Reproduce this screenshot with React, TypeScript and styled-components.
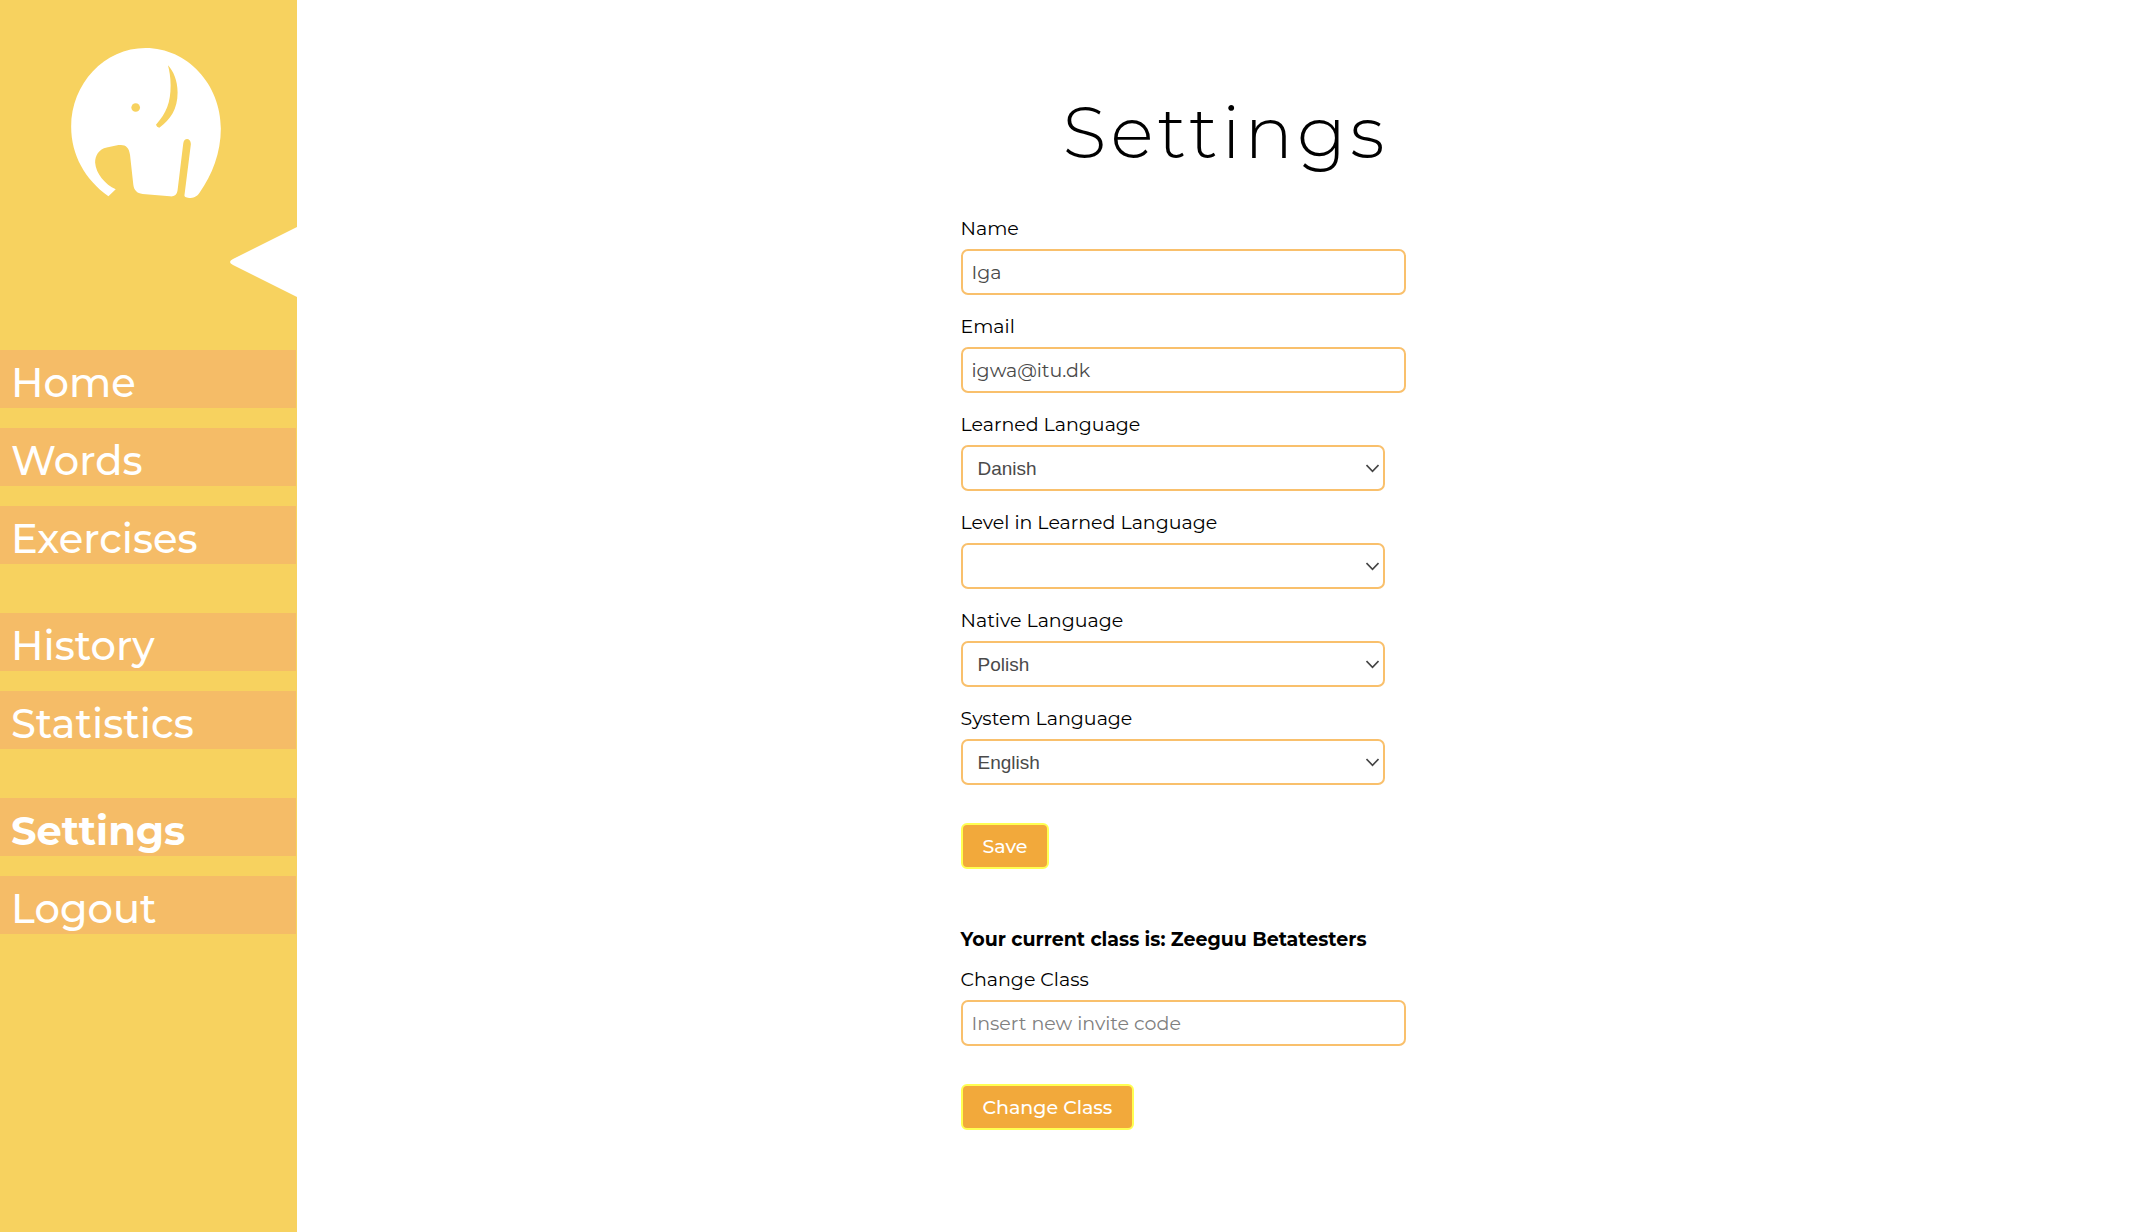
import React from "react";
import styled, { createGlobalStyle } from "styled-components";

const GlobalStyle = createGlobalStyle`
  * { box-sizing: border-box; }
  body {
    margin: 0;
    background: #fff;
    color: #000;
    font-family: Montserrat, Inter, "Open Sans", sans-serif;
    font-size: 19px;
    line-height: 24px;
  }
`;

const Page = styled.div`
  display: flex;
  min-height: 100vh;
`;

const Sidebar = styled.aside`
  display: flex;
  flex-direction: column;
  flex: 0 0 297px;
  background: #f7d25f;
`;

const LogoLink = styled.a`
  display: block;
  width: 150px;
  height: 150px;
  margin: 48px 0 0 71px;
`;

const LogoSvg = styled.svg`
  display: block;
  width: 100%;
  height: 100%;
`;

const CollapseButton = styled.button`
  align-self: flex-end;
  margin: 29px 0 53px;
  padding: 0;
  border: 0;
  background: none;
  cursor: pointer;

  svg { display: block; }
`;

const Nav = styled.nav`
  display: flex;
  flex-direction: column;
  gap: 49px;
  padding-right: 1px;
`;

const NavGroup = styled.div`
  display: flex;
  flex-direction: column;
  gap: 20px;
`;

const NavLink = styled.a<{ $active?: boolean }>`
  padding: 9px 11px 1px;
  background: #f5bc67;
  color: #fff;
  font-size: 40px;
  font-weight: ${(p) => (p.$active ? 700 : 500)};
  line-height: 48px;
  text-decoration: none;
`;

const Main = styled.main`
  flex: 1;
  display: flex;
  justify-content: center;
`;

const Column = styled.div`
  width: 530px;
  padding-top: 86px;
`;

const Title = styled.h1`
  margin: 0 0 39px;
  font-size: 72px;
  font-weight: 300;
  letter-spacing: 4px;
  line-height: 92px;
  text-align: center;
`;

const Form = styled.form`
  display: flex;
  flex-direction: column;
  align-items: flex-start;
`;

const Field = styled.div`
  display: flex;
  flex-direction: column;
  gap: 8px;
  width: 100%;
  margin-bottom: 20px;
`;

const Label = styled.label`
  font-size: 19px;
  line-height: 24px;
`;

const TextInput = styled.input`
  width: 84%;
  height: 46px;
  padding: 0 9px;
  border: 2px solid #f9c06c;
  border-radius: 7px;
  background: #fff;
  color: #4a4a4a;
  font: inherit;
  outline: none;

  &::placeholder { color: #808080; opacity: 1; }
`;

const SelectBox = styled.div`
  position: relative;
  width: 80%;

  svg {
    position: absolute;
    right: 6px;
    top: 19px;
    pointer-events: none;
  }
`;

const Select = styled.select`
  display: block;
  width: 100%;
  height: 46px;
  padding: 0 15px;
  appearance: none;
  border: 2px solid #f9c06c;
  border-radius: 7px;
  background: #fff;
  color: #4a4a4a;
  font-family: "Liberation Sans", Arial, sans-serif;
  font-size: 19px;
  outline: none;
`;

const SubmitButton = styled.button`
  height: 46px;
  margin-top: 18px;
  padding: 2px 20px 0;
  border: 2px solid #ffff52;
  border-radius: 6px;
  background: #f2a93b;
  color: #fff;
  font: inherit;
  font-weight: 500;
  cursor: pointer;
`;

const ClassHeading = styled.p`
  margin: 59px 0 16px;
  font-weight: 700;
`;

const navGroups = [
  ["Home", "Words", "Exercises"],
  ["History", "Statistics"],
  ["Settings", "Logout"],
];

function Elephant() {
  return (
    <LogoSvg viewBox="63 53 450 451" aria-hidden="true">
      <path
        fill="#fff"
        d="M175 499C105 449 63 375 63 290C63 160 163 53 287 53C412 53 513 162 513 295C513 367 487 435 449 488C440 501 430 504 418 504C408 503 402 501 404 493L423 342C422 322 402 322 400 340L383 480C381 495 373 500 360 499L278 492C260 490 252 480 250 465L240 375C237 350 225 342 205 345L170 352C146 357 135 377 135 397C137 430 165 463 197 478Z"
      />
      <path
        fill="#f7d25f"
        d="M354 105C370 122 383 150 383 187C383 237 362 268 328 293Q320 291 318 284C350 247 362 217 362 165C362 140 358 120 354 105Z"
      />
      <circle cx="257" cy="232" r="13" fill="#f7d25f" />
    </LogoSvg>
  );
}

function TextField(props: {
  id: string;
  label: string;
  type?: string;
  value?: string;
  placeholder?: string;
}) {
  return (
    <Field>
      <Label htmlFor={props.id}>{props.label}</Label>
      <TextInput
        id={props.id}
        type={props.type ?? "text"}
        defaultValue={props.value}
        placeholder={props.placeholder}
      />
    </Field>
  );
}

function SelectField(props: { id: string; label: string; value: string }) {
  return (
    <Field>
      <Label htmlFor={props.id}>{props.label}</Label>
      <SelectBox>
        <Select id={props.id} defaultValue={props.value}>
          <option value={props.value}>{props.value}</option>
        </Select>
        <svg width="13" height="9" viewBox="0 0 13 9" aria-hidden="true">
          <path d="M.5 1L6.5 7.3L12.5 1" fill="none" stroke="#444" strokeWidth="1.6" />
        </svg>
      </SelectBox>
    </Field>
  );
}

export default function App() {
  return (
    <Page>
      <GlobalStyle />
      <Sidebar>
        <LogoLink href="#home" aria-label="Home">
          <Elephant />
        </LogoLink>
        <CollapseButton type="button" aria-label="Collapse menu">
          <svg width="68" height="70" viewBox="0 0 68 70" aria-hidden="true">
            <path d="M68 0L4 32Q-2 35 4 38L68 70Z" fill="#fff" />
          </svg>
        </CollapseButton>
        <Nav>
          {navGroups.map((group) => (
            <NavGroup key={group[0]}>
              {group.map((name) => (
                <NavLink
                  key={name}
                  href={`#${name.toLowerCase()}`}
                  $active={name === "Settings"}
                >
                  {name}
                </NavLink>
              ))}
            </NavGroup>
          ))}
        </Nav>
      </Sidebar>
      <Main>
        <Column>
          <Title>Settings</Title>
          <Form onSubmit={(e) => e.preventDefault()}>
            <TextField id="name" label="Name" value="Iga" />
            <TextField id="email" label="Email" type="email" value="igwa@itu.dk" />
            <SelectField id="learned" label="Learned Language" value="Danish" />
            <SelectField id="level" label="Level in Learned Language" value="" />
            <SelectField id="native" label="Native Language" value="Polish" />
            <SelectField id="system" label="System Language" value="English" />
            <SubmitButton type="submit">Save</SubmitButton>
          </Form>
          <Form onSubmit={(e) => e.preventDefault()}>
            <ClassHeading>Your current class is: Zeeguu Betatesters</ClassHeading>
            <TextField id="invite" label="Change Class" placeholder="Insert new invite code" />
            <SubmitButton type="submit">Change Class</SubmitButton>
          </Form>
        </Column>
      </Main>
    </Page>
  );
}
